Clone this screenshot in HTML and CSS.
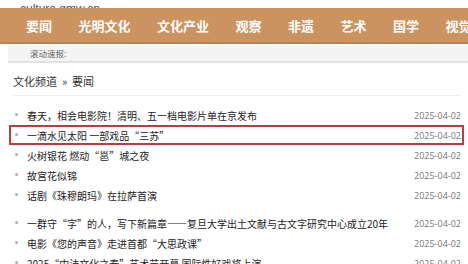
FILE: index.html
```html
<!DOCTYPE html>
<html lang="zh">
<head>
    <meta charset="UTF-8">
    <title>文化频道 - 要闻</title>
    <link rel="stylesheet" href="styles.css">
</head>
<body>
    <div class="site-url"><span>culture.gmw.cn</span></div>

    <nav class="nav">
        <a href="#">要闻</a>
        <a href="#">光明文化</a>
        <a href="#">文化产业</a>
        <a href="#">观察</a>
        <a href="#">非遗</a>
        <a href="#">艺术</a>
        <a href="#">国学</a>
        <a href="#">视觉</a>
    </nav>

    <div class="ticker">滚动速报:</div>

    <div class="main">
        <div class="crumb">文化频道 &nbsp;&raquo;&nbsp; 要闻</div>

        <ul class="news">
            <li><span class="title">春天，相会电影院！清明、五一档电影片单在京发布</span><span class="date">2025-04-02</span></li>
            <li class="marked"><span class="title">一滴水见太阳 一部戏品“三苏”</span><span class="date">2025-04-02</span></li>
            <li><span class="title">火树银花 燃动“邕”城之夜</span><span class="date">2025-04-02</span></li>
            <li><span class="title">故宫花似锦</span><span class="date">2025-04-02</span></li>
            <li><span class="title">话剧《珠穆朗玛》在拉萨首演</span><span class="date">2025-04-02</span></li>
        </ul>

        <ul class="news">
            <li><span class="title">一群守“字”的人，写下新篇章——复旦大学出土文献与古文字研究中心成立20年</span><span class="date">2025-04-02</span></li>
            <li><span class="title">电影《您的声音》走进首都“大思政课”</span><span class="date">2025-04-02</span></li>
            <li><span class="title">2025“中法文化之春”艺术节开幕 国际性好戏将上演</span><span class="date">2025-04-02</span></li>
        </ul>
    </div>
</body>
</html>
```

FILE: styles.css
```css
body {
    margin: 0;
    width: 468px;
    height: 264px;
    overflow: hidden;
    background: #fff;
    font-family: "Microsoft YaHei", "Noto Sans CJK SC", sans-serif;
    color: #333;
}
.site-url {
    height: 8px;
    overflow: hidden;
    padding-left: 20px;
    display: flex;
    align-items: flex-end;
}
.site-url span {
    font-family: "Liberation Sans", sans-serif;
    font-size: 12px;
    line-height: 12px;
    color: #4a5870;
    margin-bottom: -7px;
}
.nav {
    height: 34px;
    background: #cb9360;
    border-bottom: 2px solid #b8825a;
    display: flex;
    align-items: center;
    gap: 26.5px;
    padding-left: 26px;
    white-space: nowrap;
    overflow: hidden;
}
.nav a {
    color: #fff;
    font-size: 13px;
    font-weight: bold;
    text-decoration: none;
}
.ticker {
    margin: 2px 0 0 8px;
    height: 15px;
    background: #f4f4f4;
    border-bottom: 2px solid #e2e2e2;
    padding-left: 22px;
    font-size: 8.5px;
    line-height: 15px;
    color: #666;
}
.main {
    padding: 0 7px 0 13px;
}
.crumb {
    margin-top: 10px;
    font-size: 11px;
    line-height: 16px;
    padding-bottom: 6px;
    border-bottom: 1px solid #eee;
    color: #333;
}
.news {
    list-style: none;
    margin: 9px 0 0;
    padding: 0;
}
.news + .news {
    margin-top: 8px;
}
.news li {
    display: flex;
    align-items: center;
    height: 20px;
    position: relative;
    padding-left: 14px;
    font-size: 10px;
}
.news li::before {
    content: "";
    position: absolute;
    left: 2px;
    top: 8px;
    width: 3px;
    height: 3px;
    border-radius: 50%;
    background: #aaa;
}
.title {
    flex: 1;
    white-space: nowrap;
    overflow: hidden;
    color: #222;
}
.date {
    text-align: right;
    font-family: "Open Sans", sans-serif;
    font-size: 9px;
    color: #777;
    margin-left: 24px;
}
.news li.marked {
    margin: 0 -3px 0 -4px;
    padding-left: 16px;
    padding-right: 1px;
    height: 16px;
    border: 2px solid #b5403f;
}
.news li.marked::before {
    left: 4px;
    top: 6px;
}
```
